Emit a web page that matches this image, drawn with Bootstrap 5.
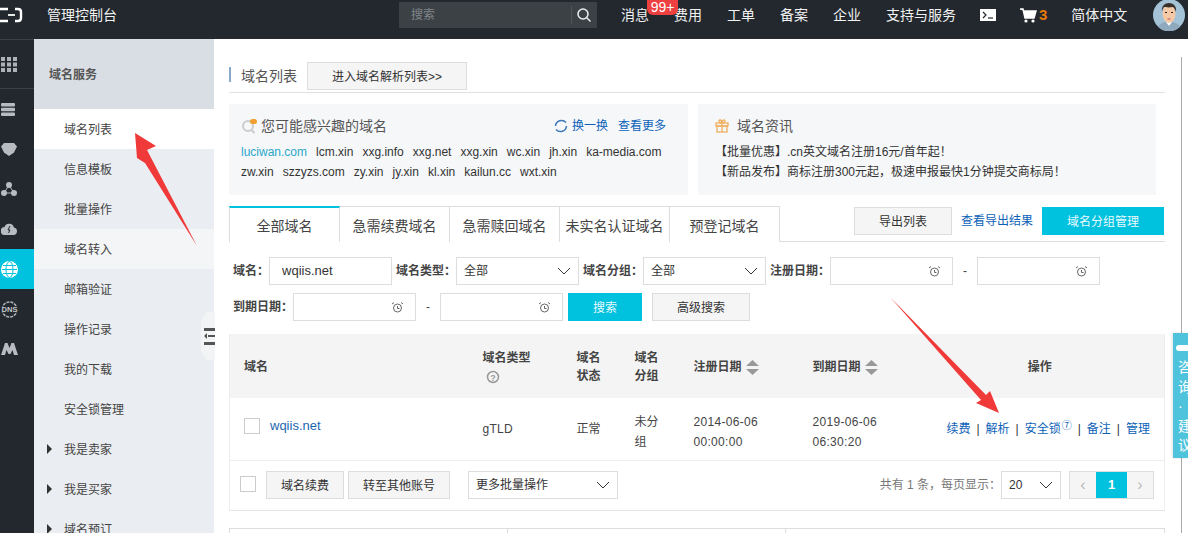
<!DOCTYPE html>
<html lang="zh"><head><meta charset="utf-8"><title>域名列表</title>
<link href="https://cdn.jsdelivr.net/npm/bootstrap@5.3.0/dist/css/bootstrap.min.css" rel="stylesheet">
<style>
html,body{height:533px;overflow:hidden}
body{font:12px/20px "Liberation Sans","Noto Sans CJK SC",sans-serif;color:#333;background:#fff;position:relative}
a{text-decoration:none;color:#0d62b8}
.topbar{height:39px;background:#22282e;color:#f2f2f2;font-size:14px;padding-bottom:9px}
.logo-box{width:34px;height:30px}
.brand{margin-left:13px;width:352px}
.searchbox{width:198px;height:26px;background:#3c4146;color:#80858a;padding-left:12px;margin-right:24px;font-size:12px;flex:none}
.searchbox svg{margin-left:auto;flex:none}
.navitem{position:relative;margin-right:25px;white-space:nowrap}
.navitem.nav24{margin-right:24px}
.msgbadge{position:absolute;left:26px;top:-5px;background:#ee4040;color:#fff;font-size:14px;line-height:15px;border-radius:0 0 6px 6px;height:15px;width:31px;text-align:center;z-index:2}
.cart3{color:#e5790c;font-weight:700;font-size:15px;margin-left:1px}
.avatar{width:32px;height:32px;margin-right:3px;margin-left:auto}
.shell{height:494px}
.rail{width:34px;background:#22282e;flex:none;box-shadow:inset 0 1px 0 #3a4046}
.railitem{height:40px;display:flex;align-items:center;padding-left:1px;overflow:hidden}
.railfirst{height:50px;border-bottom:1px solid #3a4046;padding-top:2px}
.railon{background:#00c1de}
.sidenav{width:180px;background:#eaedf1;flex:none;position:relative;overflow:hidden}
.sidehead{height:70px;background:#d9dee4;padding:2px 0 0 15px;display:flex;align-items:center;font-weight:700;color:#555}
.sideitem{height:40px;display:flex;align-items:center;padding:2px 0 0 30px;color:#444;position:relative}
.sideon{background:#fff}
.sidesoft{background:#f4f5f7}
.caret-r{position:absolute;left:13px;top:15px;border-left:5px solid #333;border-top:5px solid transparent;border-bottom:5px solid transparent}
.main{flex:1;padding:0 0 0 15px;position:relative;overflow:hidden;min-width:0}
.mainin{width:936px}
.titlerow{height:54px;padding-top:23px;border-bottom:1px solid #e1e1e1;font-size:14px;color:#555}
.titlebar{width:2px;height:15px;background:#88a9c8;margin:5px 10px 0 0;flex:none}
.titletext{margin:7px 10px 0 0;line-height:15px}
.btn-g{background:#f5f5f5;border:1px solid #ddd;border-radius:0;color:#333;font-size:12px;height:28px;padding:2px 0 0;display:flex;align-items:center;justify-content:center;white-space:nowrap}
.btn-c{background:#00c1de;border:0;border-radius:0;color:#eafaff;font-size:12px;height:28px;padding:2px 0 0;display:flex;align-items:center;justify-content:center}
.panels{margin-top:11px;gap:10px}
.panelbox{width:459px;height:91px;background:#f6f7f9;padding:11px 12px;color:#333}
.panelhead{font-size:14px;color:#555;height:22px;margin-bottom:5px}
.domains{gap:9px;line-height:20px;white-space:nowrap}
.sky{color:#2aa7c9}
.linkset{font-size:12px;margin-right:10px;gap:10px}
.tabrow{margin-top:11px;height:36px;border-bottom:1px solid #ddd;position:relative}
.tabcell{width:110px;height:36px;border:1px solid #ddd;border-left:0;border-bottom:0;display:flex;align-items:center;justify-content:center;padding-top:2px;font-size:14px;color:#444;white-space:nowrap;background:#fff}
.tabon{width:111px;border-left:1px solid #ddd;border-top:2px solid #00c1de;height:36px;margin-bottom:-1px;position:relative}
.tabacts{margin-left:auto;padding-bottom:6px;align-self:flex-end;gap:9px;margin-right:1px}
.filters{margin-top:15px;font-weight:700;color:#444;row-gap:4px;flex-wrap:wrap;white-space:nowrap}
.fbox{height:28px;border:1px solid #ddd;background:#fff;font-weight:400;color:#333;padding:0 7px;display:flex;align-items:center;justify-content:space-between}
.w123{width:123px}
.clk{margin-right:5px}
.dash{width:24px;text-align:center;font-weight:400}
.tbl{margin-top:13px;border:1px solid #eee;border-top:0;width:936px;table-layout:fixed;margin-bottom:0;--bs-table-bg:transparent}
.tbl th,.tbl td{padding:0 0 0 15px;vertical-align:middle;border:0;color:#444}
.tbl th:first-child,.tbl td:first-child{padding-left:14px}
.tbl thead tr{height:64px;background:#f4f4f4}
.tbl thead th{line-height:18px;padding-top:2px}
.tbl tbody tr{height:62px;border-bottom:1px solid #eee}
.tbl th{font-weight:700}
.tbl td.twoln{padding-top:7px}
.tbl td.nums{letter-spacing:.3px}
.tbl th.opshead{padding-left:0}
.helpmark{margin-left:3px}
.cellname{margin-top:-5px;gap:10px}
.cellname a{color:#2166b0;font-size:13px}
.cbx{width:16px;height:16px;border:1px solid #ccc;background:#fff;display:inline-block;flex:none}
.sorter{display:inline-block;vertical-align:middle;margin-left:4px}
.opslinks{text-align:right;padding-right:14px!important;white-space:nowrap}
.opslinks i{font-style:normal;margin:0 6px;color:#333}
.opslinks sup{font-size:10px;top:-.4em;margin-left:1px}
.footrow{height:50px;border:1px solid #eee;border-top:0;border-bottom:1px solid #e5e5e5;padding:10px 10px 0 10px;width:936px}
.footbox{margin-top:5px;margin-right:10px}
.pagetext{color:#777;height:28px}
.pager{display:flex;height:28px;border:1px solid #ddd;margin-left:8px}
.pager span{width:26px;display:flex;align-items:center;justify-content:center;background:#f5f5f5;color:#bbb;font-size:16px}
.pager .pon{width:31px;background:#00c1de;color:#fff;font-weight:700;font-size:13px}
.nexttbl{margin-top:17px;border:1px solid #ddd;height:30px;width:936px}
.nexttbl>div{width:278px;border-right:1px solid #ddd}
.feedback{position:absolute;left:1173px;top:333px;width:15px;height:125px;background:#4fc3dc;color:#fff;font-size:14px;line-height:19.500px;padding:25px 0 0 5px;overflow:hidden;z-index:3;white-space:nowrap;box-shadow:-1px 0 3px rgba(0,0,0,.12)}
.feedpill{position:absolute;left:3px;top:12px;width:14px;height:6px;background:#fff;border-radius:3px}
.scrolltrack{position:absolute;left:1181px;top:39px;width:7px;height:494px;background:#fff;z-index:2}
.scrollthumb{position:absolute;left:0;top:18px;bottom:0;width:7px;border-left:1px solid #aaa;background:#fff}
.collapser{position:absolute;left:201px;top:312px;width:14px;height:48px;background:#f3f4f6;z-index:2;clip-path:polygon(40% 0,100% 0,100% 100%,40% 100%,0 80%,0 20%);display:flex;align-items:center;justify-content:flex-end}
.arrow{position:absolute;left:0;top:0;width:1188px;height:533px;z-index:4;pointer-events:none}
</style></head><body>
<header class="topbar d-flex align-items-center">
 <div class="logo-box d-flex align-items-center"><svg width="24" height="16" viewBox="0 0 24 16"><path d="M8 2H-4M8 14H-4M15 2h3c1.500 0 3 1 3 3v6c0 2-1.500 3-3 3h-3" fill="none" stroke="#fff" stroke-width="2.400"/><path d="M8 8h7" stroke="#fff" stroke-width="1.800"/></svg></div>
 <div class="brand">管理控制台</div>
 <div class="searchbox d-flex align-items-center">搜索<svg width="26" height="18" viewBox="0 0 26 18"><path d="M.5 0v18" stroke="#50555a"/><circle cx="12" cy="8" r="5" fill="none" stroke="#eee" stroke-width="1.500"/><path d="M15.500 11.500l4 4" stroke="#eee" stroke-width="1.500"/></svg></div>
 <div class="d-flex align-items-center">
  <div class="navitem">消息<span class="msgbadge">99+</span></div><div class="navitem">费用</div><div class="navitem">工单</div><div class="navitem">备案</div><div class="navitem">企业</div><div class="navitem nav24">支持与服务</div>
  <div class="navitem nav24 d-flex"><svg width="16" height="12" viewBox="0 0 16 12"><rect width="16" height="12" fill="#fff"/><path d="M3 3l3 3-3 3" fill="none" stroke="#22282e" stroke-width="1.200"/><path d="M8 9h5" stroke="#22282e" stroke-width="1.200"/></svg></div>
  <div class="navitem nav24 d-flex align-items-center"><svg width="18" height="15" viewBox="0 0 18 15"><path d="M0 1h3l2 9h9l2-7H4" fill="#fff" stroke="#fff" stroke-width="1.500"/><circle cx="6" cy="13" r="1.600" fill="#fff"/><circle cx="13" cy="13" r="1.600" fill="#fff"/></svg><span class="cart3">3</span></div>
  <div class="navitem nav24 m-0">简体中文</div>
 </div>
 <div class="avatar"><svg width="32" height="32" viewBox="0 0 32 32"><circle cx="16" cy="16" r="16" fill="#a5c3d6"/><path d="M5 28c3-5 7-5 11-5s8 0 11 5a16 16 0 0 1-22 0z" fill="#8fa9bd"/><path d="M13 23l3 4 3-4z" fill="#fff"/><ellipse cx="16" cy="15" rx="6.500" ry="9" fill="#f5c9a6"/><path d="M9 13c-1-6 3-9 7-9s8 3 7 9c-1-3-2-5-4-5-3 1-7 0-8 0-1 1-2 3-2 5z" fill="#3b2f2b"/><path d="M12 13.500h2M18 13.500h2" stroke="#222" stroke-width="1.200"/><path d="M14.500 20h3" stroke="#b55" stroke-width="1"/></svg></div>
</header>
<div class="shell d-flex">
 <nav class="rail">
  <div class="railitem railfirst"><svg width="16" height="15" viewBox="0 0 16 15" fill="#aeb2b6"><rect width="4" height="4"/><rect x="6" width="4" height="4"/><rect x="12" width="4" height="4"/><rect y="5.500" width="4" height="4"/><rect x="6" y="5.500" width="4" height="4"/><rect x="12" y="5.500" width="4" height="4"/><rect y="11" width="4" height="4"/><rect x="6" y="11" width="4" height="4"/><rect x="12" y="11" width="4" height="4"/></svg></div>
  <div class="railitem"><svg width="14" height="13" viewBox="0 0 14 13" fill="#b8bbbf"><rect width="14" height="3.500" rx="1"/><rect y="4.800" width="14" height="3.500" rx="1"/><rect y="9.500" width="14" height="3.500" rx="1"/></svg></div>
  <div class="railitem"><svg width="16" height="13" viewBox="0 0 16 13"><path d="M3 0h10l3 3.500-3 6-5 3.500-5-3.500-3-6z" fill="#b8bbbf"/></svg></div>
  <div class="railitem"><svg width="16" height="14" viewBox="0 0 16 14" fill="#b8bbbf"><circle cx="8" cy="3" r="3"/><circle cx="3" cy="11" r="3"/><circle cx="13" cy="11" r="3"/><path d="M8 3L3 11h10z" fill="none" stroke="#b8bbbf"/></svg></div>
  <div class="railitem"><svg width="16" height="12" viewBox="0 0 16 12"><path d="M4 12a4 4 0 0 1-.5-8A5 5 0 0 1 13 4.500 3.800 3.800 0 0 1 12.500 12z" fill="#b8bbbf"/><path d="M9 3L7 7h2l-1.500 3" stroke="#22282e" fill="none"/></svg></div>
  <div class="railitem railon"><svg width="17" height="17" viewBox="0 0 17 17" fill="none" stroke="#00c1de"><circle cx="8.500" cy="8.500" r="8.500" fill="#fff" stroke="none"/><ellipse cx="8.500" cy="8.500" rx="3.500" ry="8"/><path d="M1 8.500h15M2 4.500h13M2 12.500h13"/></svg></div>
  <div class="railitem"><svg width="17" height="17" viewBox="0 0 17 17" fill="none"><circle cx="8.500" cy="8.500" r="7.500" stroke="#aeb2b6" stroke-width="1.600" stroke-dasharray="3 1"/><rect x="0" y="5.500" width="17" height="6" fill="#22282e"/><text x="8.500" y="11" font-size="7" font-weight="700" text-anchor="middle" fill="#c4c7ca" textLength="16" lengthAdjust="spacingAndGlyphs">DNS</text></svg></div>
  <div class="railitem"><svg width="17" height="12" viewBox="0 0 17 12"><path d="M0 12L4 0h2.500l2 5 2-5H13l4 12h-4l-1.500-5L9.500 11h-2L5.500 7 4 12z" fill="#b8bbbf"/></svg></div>
 </nav>
 <aside class="sidenav">
  <div class="sidehead">域名服务</div>
  <div class="sideitem sideon">域名列表</div><div class="sideitem">信息模板</div><div class="sideitem">批量操作</div><div class="sideitem sidesoft">域名转入</div><div class="sideitem">邮箱验证</div><div class="sideitem">操作记录</div><div class="sideitem">我的下载</div><div class="sideitem">安全锁管理</div>
  <div class="sideitem"><span class="caret-r"></span>我是卖家</div><div class="sideitem"><span class="caret-r"></span>我是买家</div><div class="sideitem"><span class="caret-r"></span>域名预订</div>
 </aside>
 <main class="main"><div class="mainin">
  <div class="titlerow d-flex align-items-start"><span class="titlebar"></span><span class="titletext">域名列表</span><a class="btn-g" style="width:160px" href="#">进入域名解析列表&gt;&gt;</a></div>
  <div class="panels d-flex">
   <section class="panelbox">
    <div class="panelhead d-flex align-items-center"><svg class="me-1" width="16" height="16" viewBox="0 0 16 16"><circle cx="7" cy="8" r="5" fill="none" stroke="#ccc" stroke-width="2"/><path d="M10.500 12l3 3" stroke="#ccc" stroke-width="2"/><rect x="9" y="1" width="7" height="5" rx="2.500" fill="#f0a030"/></svg>您可能感兴趣的域名<span class="ms-auto d-flex align-items-center linkset"><a href="#" class="d-flex align-items-center"><svg class="me-1" width="14" height="14" viewBox="0 0 14 14" fill="none" stroke="#3a78b8" stroke-width="1.500"><path d="M12 3.500A6 6 0 0 0 1.500 7M2 10.500A6 6 0 0 0 12.500 7"/></svg>换一换</a><a href="#">查看更多</a></span></div>
    <div class="domains d-flex"><a href="#" class="sky">luciwan.com</a><span>lcm.xin</span><span>xxg.info</span><span>xxg.net</span><span>xxg.xin</span><span>wc.xin</span><span>jh.xin</span><span>ka-media.com</span></div>
    <div class="domains d-flex"><span>zw.xin</span><span>szzyzs.com</span><span>zy.xin</span><span>jy.xin</span><span>kl.xin</span><span>kailun.cc</span><span>wxt.xin</span></div>
   </section>
   <section class="panelbox" style="width:458px;padding-left:17px">
    <div class="panelhead d-flex align-items-center"><svg class="me-2" width="14" height="14" viewBox="0 0 14 14" fill="none" stroke="#f0b060" stroke-width="1.300"><rect x="1" y="4" width="12" height="3"/><rect x="2" y="7" width="10" height="6"/><path d="M7 4v9M7 4C4 4 3 1 5 1s2 3 2 3 0-3 2-3 1 3-2 3"/></svg>域名资讯</div>
    <div>【批量优惠】.cn英文域名注册16元/首年起！</div>
    <div>【新品发布】商标注册300元起，极速申报最快1分钟提交商标局！</div>
   </section>
  </div>
  <div class="tabrow d-flex">
   <div class="tabcell tabon">全部域名</div><div class="tabcell">急需续费域名</div><div class="tabcell">急需赎回域名</div><div class="tabcell">未实名认证域名</div><div class="tabcell">预登记域名</div>
   <div class="tabacts d-flex align-items-center"><a class="btn-g" style="width:98px" href="#">导出列表</a><a href="#">查看导出结果</a><a class="btn-c" style="width:122px" href="#">域名分组管理</a></div>
  </div>
  <form class="filters d-flex align-items-center">
   <span style="margin-left:4px">域名：</span><div class="fbox" style="width:123px;padding-left:12px;font-size:13px">wqiis.net</div>
   <span class="ms-1">域名类型：</span><div class="fbox w123">全部<svg width="14" height="8" viewBox="0 0 14 8"><path d="M1 1l6 6 6-6" fill="none" stroke="#333"/></svg></div>
   <span class="ms-1">域名分组：</span><div class="fbox w123">全部<svg width="14" height="8" viewBox="0 0 14 8"><path d="M1 1l6 6 6-6" fill="none" stroke="#333"/></svg></div>
   <span class="ms-1">注册日期：</span><div class="fbox w123"><i></i><svg class="clk" width="11" height="11" viewBox="0 0 11 11" fill="none" stroke="#666"><circle cx="5.500" cy="6" r="4"/><path d="M5.500 4v2.500h2M0 2l2-1.500M11 2L9 .5"/></svg></div><span class="dash">-</span><div class="fbox w123"><i></i><svg class="clk" width="11" height="11" viewBox="0 0 11 11" fill="none" stroke="#666"><circle cx="5.500" cy="6" r="4"/><path d="M5.500 4v2.500h2M0 2l2-1.500M11 2L9 .5"/></svg></div>
   <div class="w-100" style="height:0"></div>
   <span style="margin-left:4px">到期日期：</span><div class="fbox w123"><i></i><svg class="clk" width="11" height="11" viewBox="0 0 11 11" fill="none" stroke="#666"><circle cx="5.500" cy="6" r="4"/><path d="M5.500 4v2.500h2M0 2l2-1.500M11 2L9 .5"/></svg></div><span class="dash">-</span><div class="fbox w123"><i></i><svg class="clk" width="11" height="11" viewBox="0 0 11 11" fill="none" stroke="#666"><circle cx="5.500" cy="6" r="4"/><path d="M5.500 4v2.500h2M0 2l2-1.500M11 2L9 .5"/></svg></div>
   <a class="btn-c fw-normal" style="width:74px;margin-left:5px" href="#">搜索</a><a class="btn-g fw-normal" style="width:98px;margin-left:10px" href="#">高级搜索</a>
  </form>
  <table class="table tbl">
   <colgroup><col style="width:238px"><col style="width:94px"><col style="width:58px"><col style="width:59px"><col style="width:119px"><col style="width:118px"><col></colgroup>
   <thead><tr><th>域名</th><th>域名类型<br><svg class="helpmark" width="14" height="14" viewBox="0 0 14 14"><circle cx="7" cy="7" r="5.500" fill="none" stroke="#999" stroke-width="1.500"/><text x="7" y="10.500" font-size="9" font-weight="700" text-anchor="middle" fill="#999">?</text></svg></th><th>域名<br>状态</th><th>域名<br>分组</th><th class="text-nowrap">注册日期<svg class="sorter" width="13" height="15" viewBox="0 0 13 15" fill="#999"><path d="M6.500 0L13 6H0zM0 9h13l-6.500 6z"/></svg></th><th class="text-nowrap">到期日期<svg class="sorter" width="13" height="15" viewBox="0 0 13 15" fill="#999"><path d="M6.500 0L13 6H0zM0 9h13l-6.500 6z"/></svg></th><th class="text-center opshead">操作</th></tr></thead>
   <tbody><tr><td><div class="d-flex align-items-center cellname"><span class="cbx"></span><a href="#">wqiis.net</a></div></td><td class="nums">gTLD</td><td>正常</td><td class="twoln">未分<br>组</td><td class="twoln nums">2014-06-06<br>00:00:00</td><td class="twoln nums">2019-06-06<br>06:30:20</td><td class="opslinks"><a href="#">续费</a><i>|</i><a href="#">解析</a><i>|</i><a href="#">安全锁<sup>⑦</sup></a><i>|</i><a href="#">备注</a><i>|</i><a href="#">管理</a></td></tr></tbody>
  </table>
  <div class="footrow d-flex align-items-start">
   <span class="cbx footbox"></span><a class="btn-g me-1" style="width:78px" href="#">域名续费</a><a class="btn-g" style="width:102px" href="#">转至其他账号</a>
   <div class="fbox" style="width:150px;margin-left:18px">更多批量操作<svg width="14" height="8" viewBox="0 0 14 8"><path d="M1 1l6 6 6-6" fill="none" stroke="#333"/></svg></div>
   <div class="ms-auto d-flex align-items-center pagetext">共有 1 条，每页显示：<div class="fbox" style="width:60px;color:#333">20<svg width="14" height="8" viewBox="0 0 14 8"><path d="M1 1l6 6 6-6" fill="none" stroke="#333"/></svg></div>
   <div class="pager"><span>‹</span><span class="pon">1</span><span>›</span></div></div>
  </div>
  <div class="nexttbl d-flex"><div></div><div></div></div>
 </div></main>
</div>
<div class="collapser"><svg width="11" height="17" viewBox="0 0 11 17" fill="#555"><rect x="0" y="0" width="11" height="3"/><rect x="4" y="7" width="7" height="2"/><path d="M0 8l3-3v6z"/><rect x="0" y="14" width="11" height="3"/></svg></div>
<div class="scrolltrack"><div class="scrollthumb"></div></div>
<aside class="feedback"><span class="feedpill"></span>咨<br>询<br>·<br>建<br>议</aside>
<svg class="arrow" viewBox="0 0 1188 533"><path d="M135 133L156 146 147 150 197 246 145 163 137 158z" fill="#f03a3a"/><path d="M890 297L986 395 990 391 999 413 976 403 981 400z" fill="#f03a3a"/></svg>
</body></html>
